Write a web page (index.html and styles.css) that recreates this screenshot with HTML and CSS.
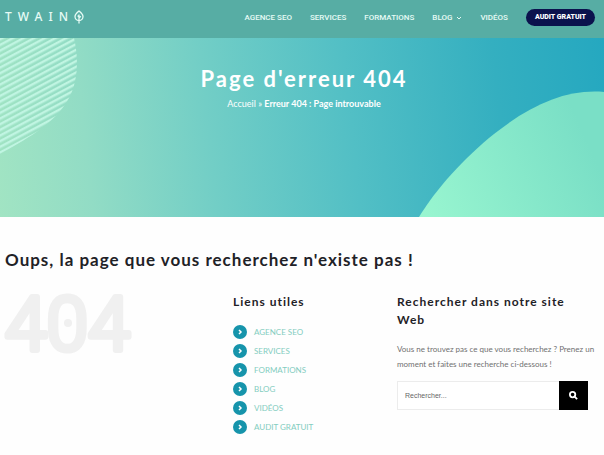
FILE: index.html
```html
<!DOCTYPE html>
<html lang="fr">
<head>
  <meta charset="UTF-8" />
  <meta name="viewport" content="width=device-width, initial-scale=1" />
  <title>Page d'erreur 404 - Twaino</title>
  <link rel="stylesheet" href="styles.css">
</head>
<body>
  <header class="header">
    <a class="logo" href="#" aria-label="Twaino">
      <span>TWAIN</span>
      <svg class="logo-leaf" viewBox="0 0 10 14" aria-hidden="true">
        <path d="M5 1C2.400 3 1 4.500 1 6.500S2.500 10.500 5 10.500s4-2 4-4S7.600 3 5 1zM5 4.500V13.500M5 8l1.800-1.800M5 7L3.600 5.600" />
      </svg>
    </a>
    <nav class="nav">
      <a href="#">AGENCE SEO</a>
      <a href="#">SERVICES</a>
      <a href="#">FORMATIONS</a>
      <a href="#">BLOG
        <svg class="caret" viewBox="0 0 6 4" aria-hidden="true"><path d="M1 1l2 2 2-2" /></svg>
      </a>
      <a href="#">VIDÉOS</a>
      <a class="btn-audit" href="#">AUDIT GRATUIT</a>
    </nav>
  </header>

  <!-- Title bar -->
  <section class="hero">
    <svg class="hero-stripes" viewBox="0 0 78 118" aria-hidden="true">
      <defs>
        <pattern id="stripes" width="10" height="5" patternUnits="userSpaceOnUse" patternTransform="rotate(-28)">
          <rect width="10" height="2.400" fill="#c0f5e2" />
        </pattern>
      </defs>
      <path d="M0 0H74C80 26 77 51 64 68C52 86 24 103 0 116Z" fill="url(#stripes)" />
    </svg>
    <svg class="hero-blob" viewBox="0 0 185 126" aria-hidden="true">
      <defs>
        <linearGradient id="blob" x1="0" y1="1" x2="1" y2="0.700">
          <stop offset="0" stop-color="#99f6d0" />
          <stop offset="1" stop-color="#7adfc6" />
        </linearGradient>
      </defs>
      <path d="M0 126C17 98 45 67 75 43C113 13 148 -2 185 1V126Z" fill="url(#blob)" />
    </svg>
    <h1>Page d'erreur 404</h1>
    <p class="breadcrumb"><a href="#">Accueil</a> » <strong>Erreur 404 : Page introuvable</strong></p>
  </section>

  <main class="content">
    <h2>Oups, la page que vous recherchez n'existe pas !</h2>
    <div class="columns">
      <div>
        <svg class="error-404" viewBox="0 0 128 64" role="img" aria-label="404">
          <text x="0" y="59">404</text>
          <circle cx="63" cy="32" r="4" />
        </svg>
      </div>

      <div>
        <h3>Liens utiles</h3>
        <ul class="links">
          <li><a href="#"><svg viewBox="0 0 14 14" aria-hidden="true"><circle cx="7" cy="7" r="7" /><path d="M6 5l2 2-2 2" /></svg>AGENCE SEO</a></li>
          <li><a href="#"><svg viewBox="0 0 14 14" aria-hidden="true"><circle cx="7" cy="7" r="7" /><path d="M6 5l2 2-2 2" /></svg>SERVICES</a></li>
          <li><a href="#"><svg viewBox="0 0 14 14" aria-hidden="true"><circle cx="7" cy="7" r="7" /><path d="M6 5l2 2-2 2" /></svg>FORMATIONS</a></li>
          <li><a href="#"><svg viewBox="0 0 14 14" aria-hidden="true"><circle cx="7" cy="7" r="7" /><path d="M6 5l2 2-2 2" /></svg>BLOG</a></li>
          <li><a href="#"><svg viewBox="0 0 14 14" aria-hidden="true"><circle cx="7" cy="7" r="7" /><path d="M6 5l2 2-2 2" /></svg>VIDÉOS</a></li>
          <li><a href="#"><svg viewBox="0 0 14 14" aria-hidden="true"><circle cx="7" cy="7" r="7" /><path d="M6 5l2 2-2 2" /></svg>AUDIT GRATUIT</a></li>
        </ul>
      </div>

      <div>
        <h3>Rechercher dans notre site Web</h3>
        <p class="help">Vous ne trouvez pas ce que vous recherchez ? Prenez un moment et faites une recherche ci-dessous !</p>
        <form class="search">
          <input type="search" placeholder="Rechercher..." aria-label="Rechercher" />
          <button type="submit" aria-label="Lancer la recherche">
            <svg viewBox="0 0 10 10" aria-hidden="true"><circle cx="4" cy="4" r="3" /><path d="M6 6l3 3" /></svg>
          </button>
        </form>
      </div>
    </div>
  </main>
</body>
</html>
```
FILE: styles.css
```css
* { box-sizing: border-box; }
body {
  font-family: Lato, sans-serif;
  font-size: 8px;
  margin: 0;
  background: #fefefe;
  color: #707070;
}
a {
  color: inherit;
  text-decoration: none;
}
h1, h2, h3 {
  font-weight: 700;
  letter-spacing: 1px;
  margin: 0;
}

/* Header */
.header {
  display: flex;
  align-items: center;
  justify-content: space-between;
  height: 38px;
  padding: 0 9px 4px 5px;
  background: #57ada4;
  color: #e6fbf5;
}
.logo {
  display: flex;
  align-items: center;
  font-family: "Noto Sans", sans-serif;
  font-size: 12px;
  font-weight: 500;
  line-height: 14px;
  letter-spacing: 6px;
}
.logo-leaf {
  width: 10px;
  height: 14px;
  fill: none;
  stroke: #e6fbf5;
  stroke-width: 1.3px;
}
.nav {
  display: flex;
  align-items: center;
  gap: 18px;
  font-family: Roboto, sans-serif;
  font-weight: 500;
}
.caret {
  width: 6px;
  height: 4px;
  margin-left: 2px;
  fill: none;
  stroke: #e6fbf5;
}
.btn-audit {
  padding: 0 9px;
  line-height: 17px;
  border-radius: 9px;
  background: #0b124d;
  color: #fff;
  font-size: 7px;
  font-weight: 900;
}

/* Title bar */
.hero {
  position: relative;
  height: 179px;
  padding-top: 24px;
  text-align: center;
  color: #fff;
  background: linear-gradient(84deg, #a1e4c3 0%, #92dcc5 15%, #72cec6 35%, #52bfc5 58%, #34afc0 82%, #25a8c0 100%);
}
.hero h1 {
  position: relative;
  padding-left: 4px;
  font-size: 22px;
  line-height: 34px;
  letter-spacing: 2px;
}
.hero-stripes {
  position: absolute;
  top: 0;
  left: 0;
  width: 78px;
  height: 118px;
}
.hero-blob {
  position: absolute;
  right: 0;
  bottom: 0;
  width: 185px;
  height: 126px;
}
.breadcrumb {
  position: relative;
  margin: 0;
  padding-left: 4px;
  font-size: 9px;
  line-height: 15px;
}

/* Content */
.content { padding: 30px 16px 20px 5px; }
.content h2 {
  font-size: 17px;
  line-height: 26px;
  color: #1f2227;
}
.columns {
  display: grid;
  grid-template-columns: 209fr 145fr 191fr;
  gap: 19px;
  margin-top: 18px;
}
.columns h3 {
  font-size: 12px;
  line-height: 18px;
  margin-top: 2px;
  color: #1f2227;
}
.error-404 {
  display: block;
  width: 128px;
  height: 64px;
  overflow: visible;
  font-family: Roboto, sans-serif;
  font-size: 75px;
  font-weight: 300;
  fill: #f0f0f0;
}
.error-404 text {
  stroke: #f0f0f0;
  stroke-width: 6px;
  stroke-linejoin: round;
}
.links {
  list-style: none;
  margin: 11px 0 0;
  padding: 0;
  color: #83cdc0;
}
.links a {
  display: flex;
  align-items: center;
  gap: 7px;
  height: 19px;
}
.links svg {
  width: 14px;
  height: 14px;
  fill: #1694ab;
}
.links path {
  fill: none;
  stroke: #fff;
  stroke-width: 1.5px;
}
.help {
  margin: 13px -12px 9px 0;
  line-height: 15px;
}
.search { display: flex; }
.search input {
  flex: 1;
  min-width: 0;
  height: 29px;
  padding: 0 7px;
  border: 1px solid #ececec;
  border-right: 0;
  border-radius: 0;
  background: #fff;
  font-family: "Liberation Sans", sans-serif;
  font-size: 7px;
  color: #555;
}
.search input::placeholder { color: #666; }
.search button {
  width: 29px;
  height: 29px;
  padding: 0;
  border: 0;
  background: #000;
}
.search svg {
  width: 9px;
  height: 9px;
  fill: none;
  stroke: #fff;
  stroke-width: 2px;
}
```
